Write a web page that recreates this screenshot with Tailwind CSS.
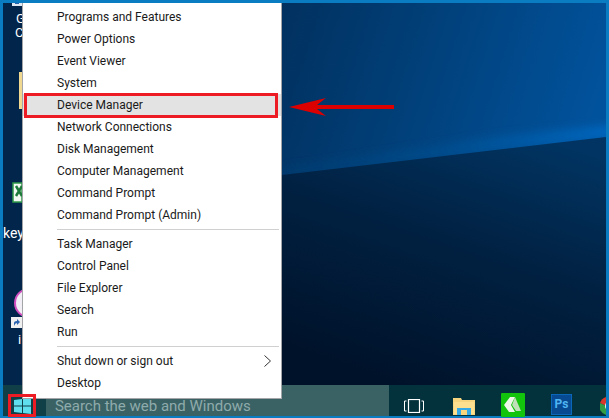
<!DOCTYPE html>
<html lang="en">
<head>
  <meta charset="UTF-8" />
  <title>Device Manager</title>
  <script src="https://cdn.jsdelivr.net/npm/@tailwindcss/browser@4"></script>
</head>
<body class="overflow-hidden">
  <div class="relative w-[609px] h-[418px] bg-[#0a7dc2] pt-[3px] px-[3px] pb-[2px] flex flex-col font-['Roboto',sans-serif] overflow-hidden">

    <!-- Desktop -->
    <div class="relative flex-1 bg-[#021533] overflow-hidden">
      <svg class="absolute inset-0" width="603" height="382" viewBox="3 3 603 382">
        <defs>
          <linearGradient id="sky" x1="0" y1="0" x2="1" y2="0.2">
            <stop offset="0.25" stop-color="#02254c" />
            <stop offset="0.65" stop-color="#013d74" />
            <stop offset="1" stop-color="#01529c" />
          </linearGradient>
          <linearGradient id="ray" x1="282" y1="175" x2="607" y2="135" gradientUnits="userSpaceOnUse">
            <stop offset="0" stop-color="#033a6e" />
            <stop offset="0.5" stop-color="#034c8c" />
            <stop offset="1" stop-color="#0566bd" />
          </linearGradient>
          <linearGradient id="ground" x1="0.8" y1="0" x2="0.35" y2="1">
            <stop offset="0" stop-color="#013462" />
            <stop offset="0.45" stop-color="#012142" />
            <stop offset="1" stop-color="#00122a" />
          </linearGradient>
          <filter id="soft"><feGaussianBlur stdDeviation="4" /></filter>
        </defs>
        <rect x="3" y="3" width="603" height="382" fill="url(#sky)" />
        <polygon points="282,177 620,137 620,124 500,136 282,168" fill="url(#ray)" filter="url(#soft)" />
        <polygon points="282,175 607,137 607,385 282,385" fill="url(#ground)" />
      </svg>

      <!-- Desktop icons behind the menu -->
      <svg class="absolute left-[8px] top-[-3px]" width="11" height="10" viewBox="0 0 11 10">
        <rect x="1" width="10" height="6" fill="#dfe8f2" />
        <rect x="4" y="0" width="4" height="4" fill="#2d63a8" />
      </svg>
      <span class="absolute left-[13px] top-[9px] text-[13px] leading-[14px] text-white">G</span>
      <span class="absolute left-[12px] top-[23px] text-[13px] leading-[14px] text-white">C</span>
      <div class="absolute left-[16px] top-[69px] w-[3px] h-[37px] bg-[#f0d890]"></div>
      <svg class="absolute left-[9px] top-[177px]" width="10" height="23" viewBox="0 0 10 23">
        <path d="M1 3h9v19H1z" fill="#f4f8f2" stroke="#2f9a4a" stroke-width="1.5" />
        <path d="M4 6l6 10M10 6L4 16" stroke="#1d7a3a" stroke-width="2.5" />
      </svg>
      <span class="absolute left-[0px] top-[222px] text-[14px] leading-4 text-white">key</span>
      <svg class="absolute left-[11px] top-[285px]" width="8" height="30" viewBox="0 0 8 30">
        <circle cx="15" cy="15" r="14" fill="#f2eef6" stroke="#d24fc0" stroke-width="2" />
      </svg>
      <svg class="absolute left-[8px] top-[314px]" width="11" height="11" viewBox="0 0 11 11">
        <rect width="11" height="11" fill="#f0f0f0" />
        <path d="M3 9V6q0-2 3-2V2l3 3-3 3V6q-2 0-3 3z" fill="#2a63b0" />
      </svg>
      <span class="absolute left-[15px] top-[329px] text-[13px] leading-4 text-white">i</span>
    </div>

    <!-- Taskbar -->
    <div class="relative h-[31px] flex items-stretch bg-[#03323c]">
      <div class="w-[43px] flex items-center justify-center bg-[#103f48] pt-[10px] pr-[4px]">
        <svg width="17" height="16" viewBox="0 0 17 16">
          <path d="M0 2l8-1v6.500H0zM9 1l8-1v7.500H9zM0 8.500h8V15l-8-1zM9 8.500h8V16l-8-1z" fill="#5fdfee" />
        </svg>
      </div>
      <div class="w-[344px] flex items-center pt-[12px] pl-[9px] bg-[#3a6265] text-[15px] text-[#8fabab]">Search the web and Windows</div>
      <div class="flex items-center pt-[10px] pl-[15px] gap-[29px] h-full">
        <svg width="20" height="14" viewBox="0 0 20 14" fill="none" stroke="#fff" stroke-width="1">
          <rect x="4.500" y="0.500" width="11" height="13" stroke-width="1.200" />
          <path d="M2.500 2H.5v10h2M17.500 2h2v10h-2" />
        </svg>
        <svg width="22" height="18" viewBox="0 0 22 18">
          <path d="M0 1h8l1 2h13v15H0z" fill="#f6d57e" />
          <path d="M1 5h20v12H1z" fill="#fde08f" />
          <path d="M4 11h14v7H4z" fill="#35a8e6" />
          <path d="M8 13h6v5H8z" fill="#f6d57e" />
        </svg>
        <svg class="-ml-[3px] -mt-[1px]" width="24" height="24" viewBox="0 0 24 24">
          <rect width="24" height="24" rx="1" fill="#12c40c" />
          <path d="M3 12l6-8h5l-4 8 4 7H8z" fill="#eef7ea" />
          <path d="M14 4l6 14h-5l-4-6z" fill="#bfe0b8" />
        </svg>
        <div class="-ml-[3px] -mt-[3px] w-[21px] h-[21px] flex items-center justify-center bg-[#074a92] border border-[#0a66b8] text-[12px] leading-none font-bold text-[#4fb4f2]">Ps</div>
        <svg class="-ml-[1px]" width="6" height="18" viewBox="0 0 6 18">
          <path d="M6 0A9 9 0 0 0 0 6l6 3z" fill="#d8382c" />
          <path d="M0 6a9 9 0 0 0 6 12V9z" fill="#2f9e44" />
          <circle cx="9" cy="9" r="4" fill="#e8f0fa" />
        </svg>
      </div>
    </div>

    <!-- Win+X menu -->
    <div class="absolute left-[22px] top-[3px] w-[260px] pt-[3px] pb-[4px] bg-white border-x border-b border-[#a3a5a8] text-[12px] text-[#1a1a1a]">
      <div class="h-[22px] pl-[34px] flex items-center">Programs and Features</div>
      <div class="h-[22px] pl-[34px] flex items-center">Power Options</div>
      <div class="h-[22px] pl-[34px] flex items-center">Event Viewer</div>
      <div class="h-[22px] pl-[34px] flex items-center">System</div>
      <div class="h-[22px] pl-[34px] flex items-center bg-[#e3e3e3]">Device Manager</div>
      <div class="h-[22px] pl-[34px] flex items-center">Network Connections</div>
      <div class="h-[22px] pl-[34px] flex items-center">Disk Management</div>
      <div class="h-[22px] pl-[34px] flex items-center">Computer Management</div>
      <div class="h-[22px] pl-[34px] flex items-center">Command Prompt</div>
      <div class="h-[22px] pl-[34px] flex items-center">Command Prompt (Admin)</div>
      <div class="h-px ml-[34px] mr-[2px] mt-[3px] mb-[3px] bg-[#d0d0d0]"></div>
      <div class="h-[22px] pl-[34px] flex items-center">Task Manager</div>
      <div class="h-[22px] pl-[34px] flex items-center">Control Panel</div>
      <div class="h-[22px] pl-[34px] flex items-center">File Explorer</div>
      <div class="h-[22px] pl-[34px] flex items-center">Search</div>
      <div class="h-[22px] pl-[34px] flex items-center">Run</div>
      <div class="h-px ml-[34px] mr-[2px] mt-[3px] mb-[3px] bg-[#d0d0d0]"></div>
      <div class="h-[22px] pl-[34px] pr-[10px] flex items-center justify-between">
        <span>Shut down or sign out</span>
        <svg width="7" height="12" viewBox="0 0 7 12" fill="none" stroke="#333" stroke-width="1"><path d="M.5.500l6 5.500-6 5.500" /></svg>
      </div>
      <div class="h-[22px] pl-[34px] flex items-center">Desktop</div>
    </div>

    <!-- Annotations -->
    <div class="absolute left-[24px] top-[93px] w-[254px] h-[25px] border-[3px] border-[#ed1c24]"></div>
    <div class="absolute left-[8px] top-[394px] w-[28px] h-[23px] border-[3px] border-[#ed1c24]"></div>
    <svg class="absolute left-[289px] top-[97px]" width="106" height="20" viewBox="0 0 106 20">
      <path d="M0 10L37 1l-9 7h77v4H28l9 7z" fill="#dc0000" />
    </svg>
  </div>
</body>
</html>
